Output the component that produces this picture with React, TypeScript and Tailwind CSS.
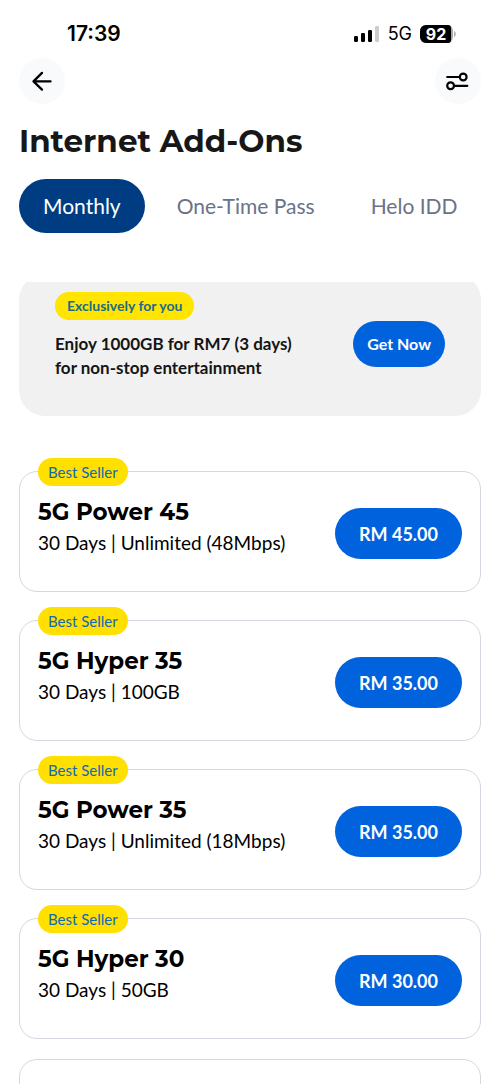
import React, { useState } from 'react';

interface Plan {
  name: string;
  detail: string;
  price: string;
  bestSeller?: boolean;
}

const TABS = ['Monthly', 'One-Time Pass', 'Helo IDD'];

const PLANS: Plan[] = [
  { name: '5G Power 45', detail: '30 Days | Unlimited (48Mbps)', price: 'RM 45.00', bestSeller: true },
  { name: '5G Hyper 35', detail: '30 Days | 100GB', price: 'RM 35.00', bestSeller: true },
  { name: '5G Power 35', detail: '30 Days | Unlimited (18Mbps)', price: 'RM 35.00', bestSeller: true },
  { name: '5G Hyper 30', detail: '30 Days | 50GB', price: 'RM 30.00', bestSeller: true },
];

function StatusBar() {
  return (
    <div className="flex h-[58px] shrink-0 items-center justify-between pt-2.5 pr-11 pl-[67px] font-['Inter',sans-serif] text-black">
      <span className="text-[21px] font-semibold">17:39</span>
      <div className="flex items-center gap-2">
        <svg className="h-4 w-[26px]" viewBox="0 0 26 16" aria-hidden="true">
          <rect x="0" y="10" width="4" height="6" rx="1.2" />
          <rect x="7" y="7" width="4" height="9" rx="1.2" />
          <rect x="14" y="4" width="4" height="12" rx="1.2" />
          <rect x="21" y="0" width="4" height="16" rx="1.2" fill="#cccccc" />
        </svg>
        <span className="text-lg">5G</span>
        <svg className="h-[18px] w-9" viewBox="0 0 36 18" aria-hidden="true">
          <rect x="0" y="0" width="33" height="18" rx="6" fill="#a8a8a8" />
          <path d="M6 0h22c2 0 3 1 3 3v12c0 2-1 3-3 3H6a6 6 0 0 1-6-6V6a6 6 0 0 1 6-6z" />
          <path d="M34 6c2.4 1 2.4 5 0 6z" fill="#b0b0b0" />
          <text x="16" y="15" textAnchor="middle" fontSize="16" fontWeight="700" fill="#fff">
            92
          </text>
        </svg>
      </div>
    </div>
  );
}

function Header() {
  return (
    <header className="flex shrink-0 items-center justify-between px-[19px]">
      <button aria-label="Back" className="flex size-[46px] items-center justify-center rounded-full bg-[#f9fafc]">
        <svg className="size-6" viewBox="0 0 24 24" fill="none" stroke="#000" strokeWidth="2.3" strokeLinecap="round" strokeLinejoin="round">
          <path d="M20.5 12.4H3.5M12 3.9L3.5 12.4l8.5 8.2" />
        </svg>
      </button>
      <button aria-label="Filter" className="flex size-[46px] items-center justify-center rounded-full bg-[#f9fafc]">
        <svg className="size-6" viewBox="0 0 24 24" fill="none" stroke="#000" strokeWidth="2.2" strokeLinecap="round">
          <path d="M1.2 8h12.3M8 16.8h13.3" />
          <circle cx="17.2" cy="8" r="3.4" />
          <circle cx="4.6" cy="16.8" r="3.4" />
        </svg>
      </button>
    </header>
  );
}

function PromoBanner() {
  return (
    <section className="-mt-2 flex items-center justify-between rounded-[26px] bg-[#f1f1f1] pt-[18px] pr-9 pb-9 pl-9">
      <div className="flex flex-col items-start">
        <span className="flex h-7 items-center rounded-full bg-[#ffe500] px-3 text-sm font-bold text-[#1c6b8c]">
          Exclusively for you
        </span>
        <p className="mt-3 text-[17px] leading-6 font-bold text-[#151515]">
          Enjoy 1000GB for RM7 (3 days)
          <br />
          for non-stop entertainment
        </p>
      </div>
      <button className="mt-4 h-[46px] shrink-0 rounded-full bg-[#0063dd] px-3.5 text-base font-bold text-white">
        Get Now
      </button>
    </section>
  );
}

function PlanCard({ plan }: { plan: Plan }) {
  return (
    <article className="relative flex h-[121px] items-start justify-between rounded-[18px] border border-[#d3d7e0] px-[18px]">
      {plan.bestSeller && (
        <span className="absolute -top-3.5 left-[18px] flex h-7 items-center rounded-full bg-[#ffe000] px-2.5 text-[15px] text-[#1268b8]">
          Best Seller
        </span>
      )}
      <div className="pt-6">
        <h2 className="font-['Montserrat','Inter',sans-serif] text-[23px] leading-8 font-bold text-black">{plan.name}</h2>
        <p className="text-[19px] leading-[30px] text-black">{plan.detail}</p>
      </div>
      <button className="mt-9 h-[51px] shrink-0 rounded-full bg-[#0063dd] px-6 text-lg font-bold text-white">
        {plan.price}
      </button>
    </article>
  );
}

export default function App() {
  const [activeTab, setActiveTab] = useState('Monthly');

  return (
    <div className="flex h-screen flex-col overflow-hidden bg-white font-['Lato',sans-serif]">
      <StatusBar />
      <Header />
      <h1 className="mt-[17px] shrink-0 px-[19px] font-['Montserrat','Inter',sans-serif] text-[31px] leading-10 font-bold text-[#171717]">
        Internet Add-Ons
      </h1>

      <nav className="mt-[18px] flex shrink-0 gap-2 px-[19px]">
        {TABS.map((tab) => (
          <button
            key={tab}
            onClick={() => setActiveTab(tab)}
            className={`h-[54px] shrink-0 rounded-full px-6 text-[21px] whitespace-nowrap ${
              activeTab === tab ? 'bg-[#003c82] text-white' : 'text-[#6b7288]'
            }`}
          >
            {tab}
          </button>
        ))}
      </nav>

      <main className="mt-[49px] flex-1 overflow-y-auto px-[19px] [scrollbar-width:none]">
        <PromoBanner />
        <div className="mt-[55px] flex flex-col gap-7">
          {PLANS.map((plan) => (
            <PlanCard key={plan.name} plan={plan} />
          ))}
        </div>
        {/* next plan, still loading */}
        <div className="mt-5 h-[121px] rounded-[18px] border border-[#d3d7e0]" />
      </main>
    </div>
  );
}
